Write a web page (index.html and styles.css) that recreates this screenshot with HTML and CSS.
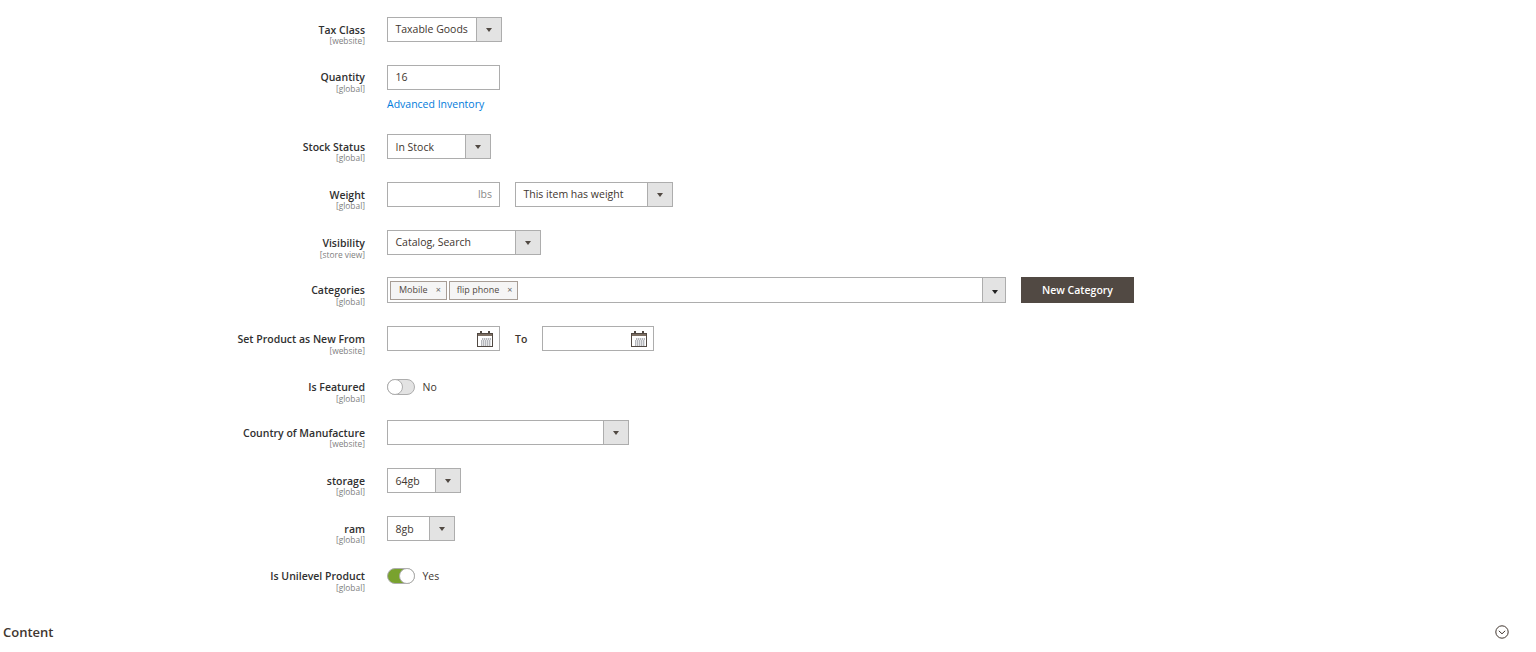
FILE: index.html
```html
<!DOCTYPE html>
<html lang="en">
<head>
  <meta charset="UTF-8" />
  <title>Product attributes</title>
  <link rel="stylesheet" href="styles.css">
</head>
<body>
<div class="form">

  <div class="row">
    <div class="label"><b>Tax Class</b><small>[website]</small></div>
    <div class="select w-115"><span>Taxable Goods</span><i class="arrow"></i></div>
  </div>

  <div class="row row-qty">
    <div class="label"><b>Quantity</b><small class="drop">[global]</small></div>
    <div class="stack">
      <div class="input">16</div>
      <a class="link" href="#">Advanced Inventory</a>
    </div>
  </div>

  <div class="row">
    <div class="label"><b>Stock Status</b><small>[global]</small></div>
    <div class="select w-104 low"><span>In Stock</span><i class="arrow"></i></div>
  </div>

  <div class="row">
    <div class="label"><b>Weight</b><small>[global]</small></div>
    <div class="input input-unit">lbs</div>
    <div class="select w-158 ml-15"><span>This item has weight</span><i class="arrow"></i></div>
  </div>

  <div class="row row-vis">
    <div class="label"><b>Visibility</b><small class="drop">[store view]</small></div>
    <div class="select w-154"><span>Catalog, Search</span><i class="arrow"></i></div>
  </div>

  <div class="row row-cat">
    <div class="label"><b>Categories</b><small class="drop">[global]</small></div>
    <div class="multi">
      <div class="tags">
        <div class="tag">Mobile<em>×</em></div>
        <div class="tag">flip phone<em>×</em></div>
      </div>
      <i class="arrow arrow-dark"></i>
    </div>
    <button class="btn">New Category</button>
  </div>

  <div class="row row-date">
    <div class="label"><b>Set Product as New From</b><small class="drop">[website]</small></div>
    <div class="input input-date">
      <svg width="16" height="16" viewBox="0 0 16 16"><path d="M3 0h2v3H3zM11 0h2v3h-2z" fill="#514943"/><rect x="0.5" y="2.5" width="15" height="13" fill="#fff" stroke="#514943"/><rect x="1" y="3" width="14" height="2" fill="#7d6f63"/><path d="M5 8h9M4 10h10M4 12h10M4 14h10" stroke="#6b6f78" stroke-dasharray="1.4 .6"/></svg>
    </div>
    <b class="to">To</b>
    <div class="input input-date w-112">
      <svg width="16" height="16" viewBox="0 0 16 16"><path d="M3 0h2v3H3zM11 0h2v3h-2z" fill="#514943"/><rect x="0.5" y="2.5" width="15" height="13" fill="#fff" stroke="#514943"/><rect x="1" y="3" width="14" height="2" fill="#7d6f63"/><path d="M5 8h9M4 10h10M4 12h10M4 14h10" stroke="#6b6f78" stroke-dasharray="1.4 .6"/></svg>
    </div>
  </div>

  <div class="row row-toggle row-feat">
    <div class="label"><b>Is Featured</b><small class="drop">[global]</small></div>
    <div class="toggle"><i class="knob"></i></div>
    <span class="toggle-text">No</span>
  </div>

  <div class="row">
    <div class="label"><b>Country of Manufacture</b><small>[website]</small></div>
    <div class="select w-242"><span></span><i class="arrow"></i></div>
  </div>

  <div class="row">
    <div class="label"><b>storage</b><small>[global]</small></div>
    <div class="select w-74 low"><span>64gb</span><i class="arrow"></i></div>
  </div>

  <div class="row row-ram">
    <div class="label"><b>ram</b><small>[global]</small></div>
    <div class="select w-68 low"><span>8gb</span><i class="arrow"></i></div>
  </div>

  <div class="row row-toggle">
    <div class="label"><b>Is Unilevel Product</b><small class="drop">[global]</small></div>
    <div class="toggle on"><i class="knob"></i></div>
    <span class="toggle-text">Yes</span>
  </div>
</div>

<div class="section">
  <strong>Content</strong>
  <svg width="14" height="14" viewBox="0 0 14 14"><circle cx="7" cy="7" r="6.2" fill="none" stroke="#41362f" stroke-width="1"/><path d="M3.8 5.8 7 8.8l3.2-3" fill="none" stroke="#41362f" stroke-width="1"/></svg>
</div>
</body>
</html>
```

FILE: styles.css
```css
html, body {
  height: 100%;
}

body {
  margin: 0;
  background: #fff;
  color: #41362f;
  font-family: "Open Sans", sans-serif;
  font-size: 10.5px;
  overflow: hidden;
}

.form {
  padding-top: 17px;
}

.row {
  display: flex;
  align-items: flex-start;
  height: 25px;
  margin-bottom: 23px;
}

.row-qty { height: 47px; margin-bottom: 22px; }
.row-vis { margin-bottom: 22px; }
.row-cat { height: 26px; }
.row-date { margin-bottom: 28px; }
.row-ram { margin-bottom: 27px; }
.row-feat { margin-bottom: 25px; }

.row-toggle {
  height: 16px;
}

.label {
  width: 365px;
  margin-right: 22px;
  text-align: right;
  padding-top: 7px;
  flex-shrink: 0;
}

.row-qty .label {
  padding-top: 6px;
}

.row-toggle .label {
  padding-top: 2px;
}

.label b {
  display: block;
  font-size: 10.5px;
  font-weight: 600;
  line-height: 13px;
  color: #303030;
}

.label small {
  display: block;
  margin-top: -1px;
  font-size: 8.4px;
  line-height: 9px;
  color: #808080;
}

.label small.drop {
  margin-top: 0;
}

.select {
  display: flex;
  height: 25px;
  box-sizing: border-box;
  border: 1px solid #adadad;
  background: #fff;
  flex-shrink: 0;
}

.select span {
  flex: 1;
  padding-left: 7.5px;
  line-height: 22px;
  white-space: nowrap;
}

.select.low span {
  line-height: 24px;
}

.arrow {
  position: relative;
  width: 24px;
  background: #e3e3e3;
  border-left: 1px solid #adadad;
  flex-shrink: 0;
}

.arrow::after {
  content: "";
  position: absolute;
  left: 9px;
  top: 10px;
  border-left: 3px solid transparent;
  border-right: 3px solid transparent;
  border-top: 4px solid #514943;
}

.arrow-dark::after {
  border-top-color: #222;
  top: 12px;
}

.w-115 { width: 115px; }
.w-104 { width: 104px; }
.w-158 { width: 158px; }
.w-154 { width: 154px; }
.w-242 { width: 242px; }
.w-74 { width: 74px; }
.w-68 { width: 68px; }
.ml-15 { margin-left: 15px; }

.input {
  width: 113px;
  height: 25px;
  box-sizing: border-box;
  border: 1px solid #adadad;
  padding-left: 7.5px;
  line-height: 22px;
  flex-shrink: 0;
}

.input-unit {
  padding: 0 7px 0 0;
  text-align: right;
  color: #8a8a8a;
}

.input-date {
  display: flex;
  justify-content: flex-end;
  align-items: center;
  padding: 0 6px 0 0;
}

.w-112 { width: 112px; }

.stack {
  display: flex;
  flex-direction: column;
}

.link {
  margin-top: 6px;
  color: #007bdb;
  text-decoration: none;
  line-height: 16px;
}

.multi {
  display: flex;
  width: 619px;
  height: 26px;
  box-sizing: border-box;
  border: 1px solid #adadad;
  flex-shrink: 0;
}

.tags {
  flex: 1;
  display: flex;
  gap: 2px;
  padding: 3px 0 0 2px;
}

.tag {
  height: 19px;
  box-sizing: border-box;
  padding: 0 5px 0 8px;
  border: 1px solid #a79d95;
  background: #f5f5f5;
  font-size: 9px;
  line-height: 16px;
  color: #514943;
}

.tag + .tag {
  padding-left: 7px;
}

.tag em {
  margin-left: 8px;
  font-style: normal;
  color: #666;
}

.multi .arrow {
  width: 22px;
}

.btn {
  margin-left: 15px;
  width: 113px;
  height: 26px;
  border: 0;
  padding: 0;
  background: #514943;
  color: #fff;
  font-family: inherit;
  font-size: 10.5px;
  font-weight: 600;
}

.to {
  width: 27px;
  margin-left: 15px;
  line-height: 26px;
  font-weight: 600;
}

.toggle {
  position: relative;
  width: 28px;
  height: 16px;
  box-sizing: border-box;
  border: 1px solid #adadad;
  border-radius: 8px;
  background: #e3e3e3;
}

.toggle.on {
  background: #79a22e;
}

.knob {
  position: absolute;
  left: -1px;
  top: -1px;
  width: 16px;
  height: 16px;
  box-sizing: border-box;
  border: 1px solid #adadad;
  border-radius: 50%;
  background: #fff;
}

.toggle.on .knob {
  left: 11px;
}

.toggle-text {
  margin-left: 7.5px;
  line-height: 16px;
}

.section {
  display: flex;
  justify-content: space-between;
  align-items: center;
  padding: 0 27px 0 3px;
  margin-top: 39px;
}

.section strong {
  font-size: 13px;
  font-weight: 600;
  line-height: 18px;
}
```
